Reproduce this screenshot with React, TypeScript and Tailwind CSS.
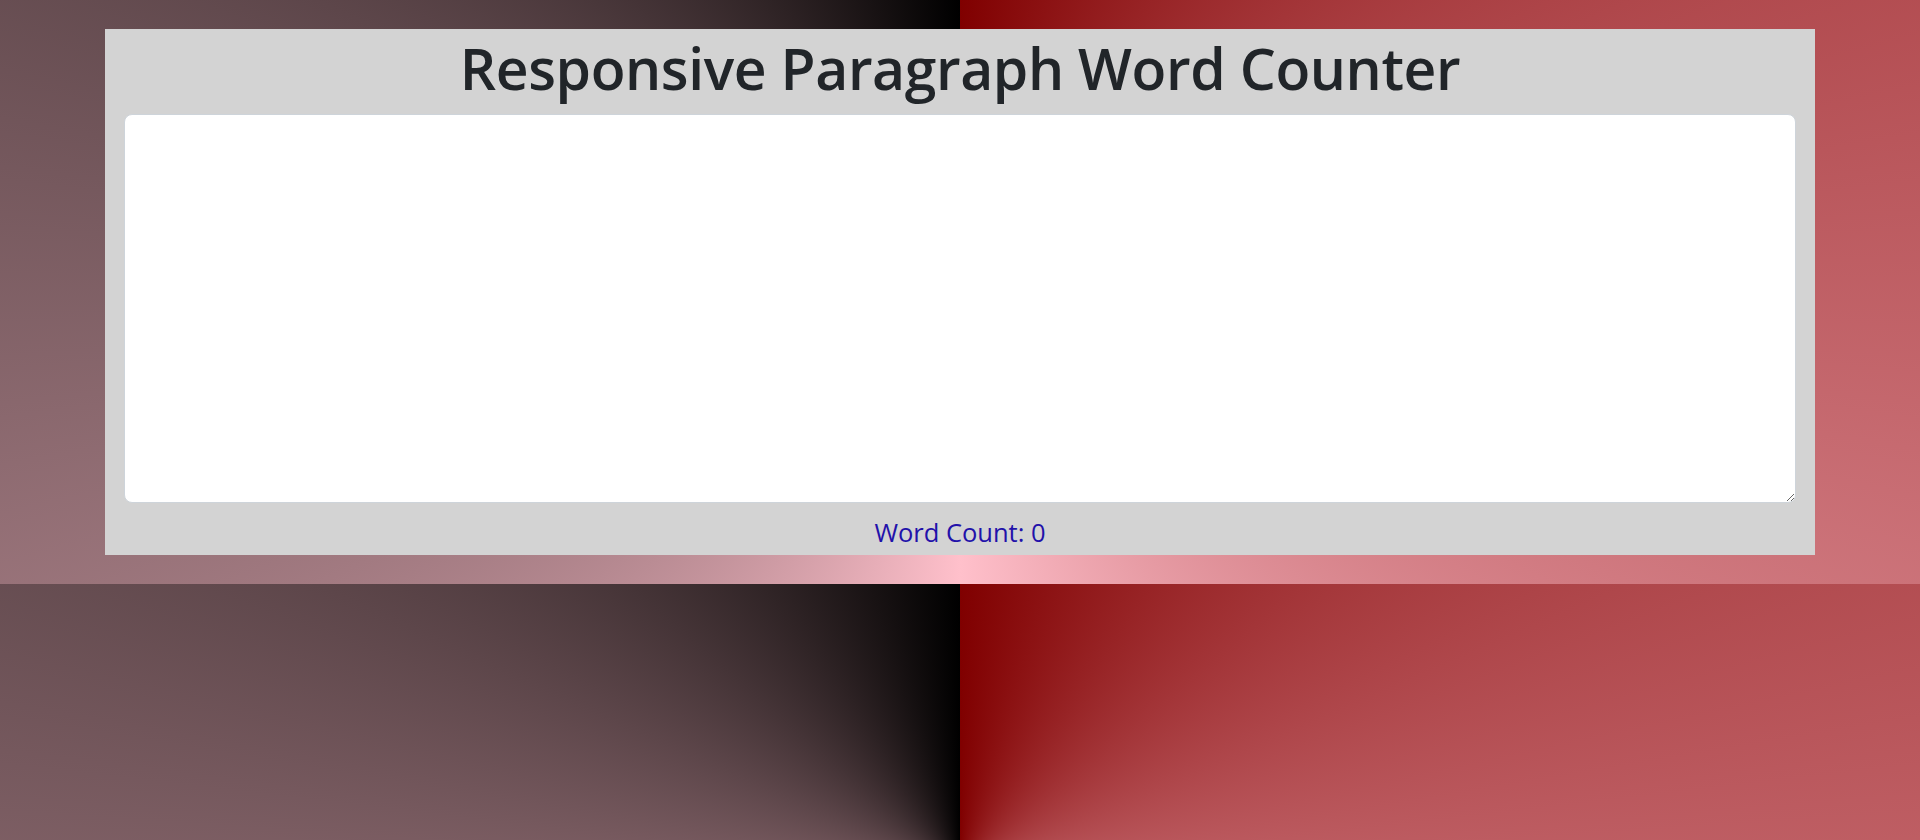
import { useState } from "react";

export default function App() {
  const [text, setText] = useState("");
  const words = text.trim() ? text.trim().split(/\s+/).length : 0;

  return (
    <div className="h-[840px] w-full overflow-hidden bg-[conic-gradient(maroon,pink,black)] bg-[length:100%_584px] pt-[29px] font-['Open_Sans',sans-serif]">
      <div className="mx-[105px] flex flex-col bg-[#d3d3d3] px-[19px] pb-[4px]">
        <h1 className="h-[85px] pb-[6px] text-center text-[57px] font-semibold leading-[79px] tracking-[-0.4px] text-[#212529]">
          Responsive Paragraph Word Counter
        </h1>

        <textarea
          value={text}
          onChange={(e) => setText(e.target.value)}
          className="h-[389px] w-full rounded-lg border border-[#ced4da] bg-white p-3 text-base text-[#212529] outline-none"
        />

        <p className="mt-[11px] text-center text-[25.5px] leading-[37px] text-[#2211aa]">
          Word Count: {words}
        </p>
      </div>
    </div>
  );
}
